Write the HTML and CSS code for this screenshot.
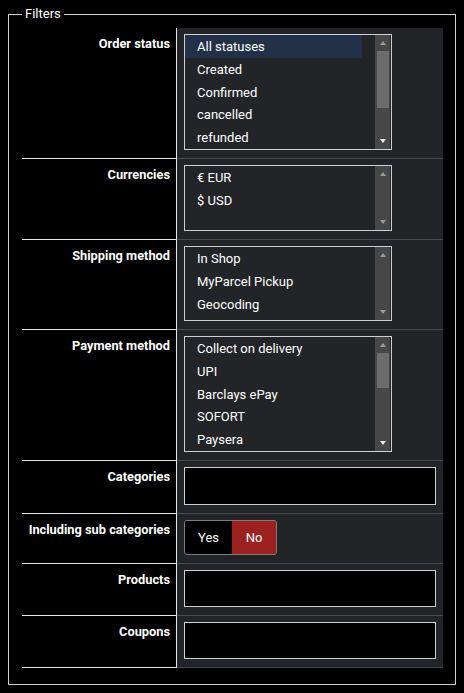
FILE: index.html
```html
<!DOCTYPE html>
<html>
<head>
<meta charset="utf-8">
<link rel="stylesheet" href="styles.css">
</head>
<body>
<fieldset class="filters">
  <legend>Filters</legend>
  <div class="grid">
    <div class="lbl">Order status</div>
    <div class="val">
      <div class="select sel-status">
        <div class="opts">
          <div class="opt on">All statuses</div>
          <div class="opt">Created</div>
          <div class="opt">Confirmed</div>
          <div class="opt">cancelled</div>
          <div class="opt">refunded</div>
        </div>
        <div class="sb">
          <div class="btn"><span class="tri up dis"></span></div>
          <div class="track"><div class="thumb" style="height:57px"></div></div>
          <div class="btn"><span class="tri down"></span></div>
        </div>
      </div>
    </div>

    <div class="lbl">Currencies</div>
    <div class="val">
      <div class="select sel-cur">
        <div class="opts">
          <div class="opt">€ EUR</div>
          <div class="opt">$ USD</div>
        </div>
        <div class="sb">
          <div class="btn"><span class="tri up dis"></span></div>
          <div class="track"></div>
          <div class="btn"><span class="tri down dis"></span></div>
        </div>
      </div>
    </div>

    <div class="lbl">Shipping method</div>
    <div class="val">
      <div class="select sel-ship">
        <div class="opts">
          <div class="opt">In Shop</div>
          <div class="opt">MyParcel Pickup</div>
          <div class="opt">Geocoding</div>
        </div>
        <div class="sb">
          <div class="btn"><span class="tri up dis"></span></div>
          <div class="track"></div>
          <div class="btn"><span class="tri down dis"></span></div>
        </div>
      </div>
    </div>

    <div class="lbl">Payment method</div>
    <div class="val">
      <div class="select sel-pay">
        <div class="opts">
          <div class="opt">Collect on delivery</div>
          <div class="opt">UPI</div>
          <div class="opt">Barclays ePay</div>
          <div class="opt">SOFORT</div>
          <div class="opt">Paysera</div>
        </div>
        <div class="sb">
          <div class="btn"><span class="tri up dis"></span></div>
          <div class="track"><div class="thumb" style="height:35px"></div></div>
          <div class="btn"><span class="tri down"></span></div>
        </div>
      </div>
    </div>

    <div class="lbl">Categories</div>
    <div class="val"><div class="box box-lg"></div></div>

    <div class="lbl">Including sub categories</div>
    <div class="val">
      <div class="toggle">
        <span class="tg yes">Yes</span>
        <span class="tg no">No</span>
      </div>
    </div>

    <div class="lbl">Products</div>
    <div class="val"><div class="box"></div></div>

    <div class="lbl">Coupons</div>
    <div class="val"><div class="box"></div></div>
  </div>
</fieldset>
</body>
</html>
```

FILE: styles.css
```css
html, body {
  background: #000;
}
body {
  margin: 8px;
  color: #fff;
  font-family: Roboto, "Liberation Sans", Arial, sans-serif;
  font-size: 13px;
}
.filters {
  margin: 0;
  border: 1px solid #cfcfcf;
  padding: 8px 13px 16px;
  min-width: 0;
}
.filters legend {
  padding: 0 3px;
  font-size: 13px;
  line-height: 12px;
}
.grid {
  display: grid;
  grid-template-columns: 155px 1fr;
}
.lbl {
  border-right: 1px solid #e6e6e6;
  border-bottom: 1px solid #e6e6e6;
  text-align: right;
  font-weight: bold;
  font-size: 12.8px;
  line-height: 16px;
  padding: 8px 6px 0 0;
}
.val {
  background: #222428;
  border-bottom: 1px solid #45484d;
  padding: 6px 7px 8px;
}
.select {
  width: 208px;
  box-sizing: border-box;
  border: 1px solid #cfcfcf;
  display: flex;
  overflow: hidden;
}
.sel-status, .sel-pay { height: 116px; }
.sel-cur { height: 66px; }
.sel-ship { height: 75px; }
.opts {
  flex: 1;
  padding-right: 13px;
}
.opt {
  line-height: 14.75px;
  padding: 5px 0 3px 12px;
  white-space: nowrap;
}
.opt.on {
  background: #233148;
}
.sb {
  width: 15px;
  margin-right: 1px;
  background: #474747;
  display: flex;
  flex-direction: column;
}
.btn {
  height: 16px;
  display: flex;
  align-items: center;
  justify-content: center;
}
.track {
  flex: 1;
}
.thumb {
  margin: 0 1px 0 2px;
  background: #6c6c6c;
}
.tri {
  width: 0;
  height: 0;
  border-left: 3.5px solid transparent;
  border-right: 3.5px solid transparent;
}
.tri.up { border-bottom: 4px solid #e8e8e8; }
.tri.down { border-top: 4px solid #f0f0f0; }
.tri.up.dis { border-bottom-color: #9a9a9a; }
.tri.down.dis { border-top-color: #9a9a9a; }
.box {
  width: 252px;
  height: 37px;
  box-sizing: border-box;
  border: 1px solid #cfcfcf;
  background: #000;
}
.box-lg { height: 38px; }
.toggle {
  display: inline-flex;
  height: 35px;
  box-sizing: border-box;
  border: 1px solid #7d7d7d;
  border-radius: 3px;
  overflow: hidden;
  vertical-align: top;
}
.tg {
  display: flex;
  align-items: center;
  justify-content: center;
  font-size: 13px;
}
.tg.yes {
  width: 47px;
  background: #000;
}
.tg.no {
  width: 44px;
  background: #9d2020;
}
```
